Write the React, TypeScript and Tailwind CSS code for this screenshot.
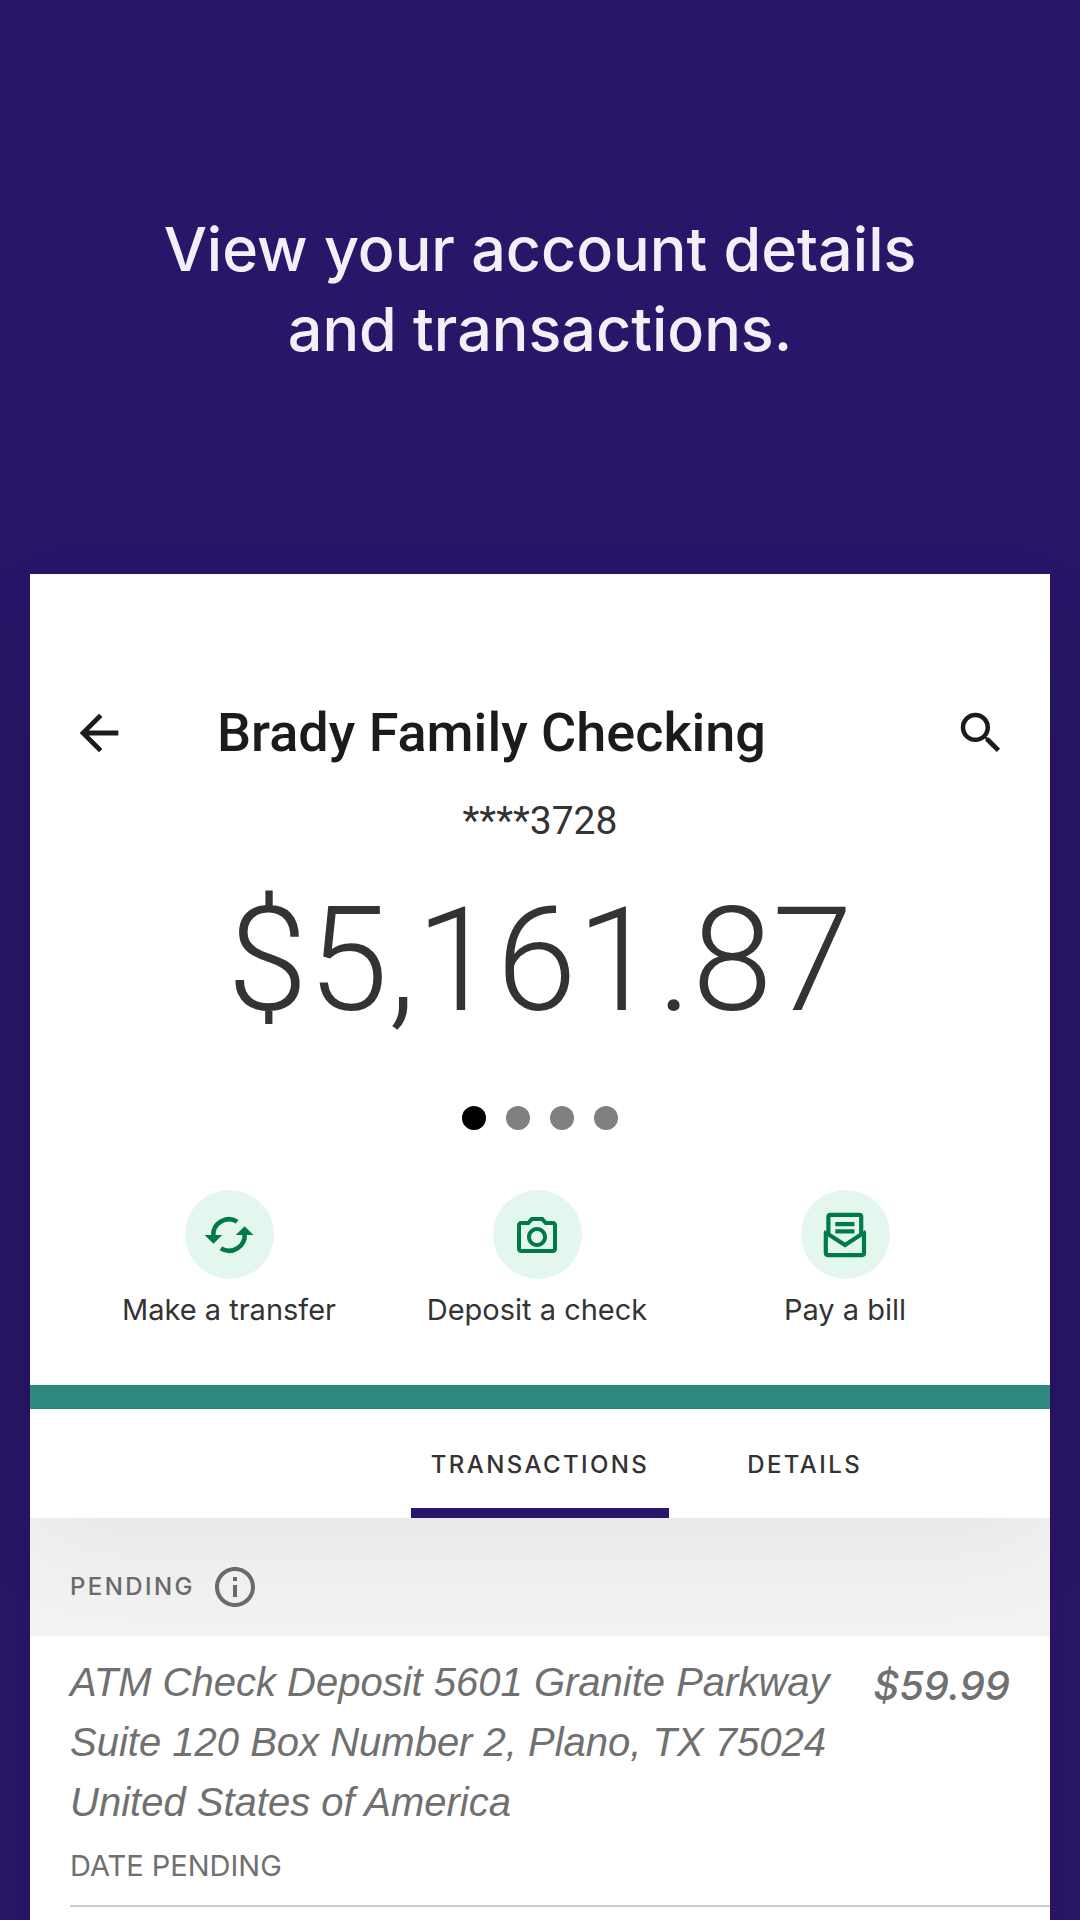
import React, { useState } from 'react';
import { MdArrowBack, MdInfoOutline, MdSearch } from 'react-icons/md';

interface Action {
  label: string;
  icon: React.ReactNode;
}

interface Transaction {
  id: number;
  description: string;
  amount: string;
  status: string;
}

const TransferIcon = () => (
  <svg viewBox="-25 -25 50 50" className="size-[50px]" fill="none" stroke="currentColor" strokeWidth={4.6}>
    <path d="M-15.7 1A15.7 15.7 0 0 1 8.2 -13.4" />
    <path d="M15.7 -1A15.7 15.7 0 0 1 -8.2 13.4" />
    <path d="M-24.4 0h17.6l-8.8 8.8zM24.4 0H6.8l8.8 -8.8z" fill="currentColor" stroke="none" />
  </svg>
);

const CameraIcon = () => (
  <svg viewBox="0 -1 24 24" className="size-[48px]" fill="currentColor">
    <path d="M14.12 4l1.83 2H20v12H4V6h4.05l1.83-2h4.24M15 2H9L7.17 4H4c-1.1 0-2 .9-2 2v12c0 1.1.9 2 2 2h16c1.1 0 2-.9 2-2V6c0-1.1-.9-2-2-2h-3.17L15 2zm-3 7c1.65 0 3 1.35 3 3s-1.35 3-3 3-3-1.35-3-3 1.35-3 3-3m0-2c-2.76 0-5 2.24-5 5s2.24 5 5 5 5-2.24 5-5-2.24-5-5-5z" />
  </svg>
);

const BillIcon = () => (
  <svg viewBox="-25 -25 50 50" className="size-[50px]" fill="none" stroke="currentColor" strokeWidth={4.2}>
    <path d="M-16.6 -1.5V-18.2q0 -2 2 -2H14.2q2 0 2 2V-1.5" />
    <path d="M-18.6 -3.6q-.6 .6 -.6 1.6V18.1q0 2 2 2H17q2 0 2 -2V-2q0 -1 -.6 -1.6" />
    <path d="M-19 -2.2L0 10L18.8 -2.2" />
    <path d="M-9.7 -10.8H9.4M-9.7 -3.6H9.4" />
  </svg>
);

const actions: Action[] = [
  { label: 'Make a transfer', icon: <TransferIcon /> },
  { label: 'Deposit a check', icon: <CameraIcon /> },
  { label: 'Pay a bill', icon: <BillIcon /> },
];

const transactions: Transaction[] = [
  {
    id: 1,
    description: 'ATM Check Deposit 5601 Granite Parkway Suite 120 Box Number 2, Plano, TX 75024 United States of America',
    amount: '$59.99',
    status: 'DATE PENDING',
  },
];

const pages = [0, 1, 2, 3];

const App = () => {
  const [page, setPage] = useState(0);
  const [tab, setTab] = useState('transactions');

  return (
    <div className="flex min-h-screen flex-col bg-[#291669] px-[30px] font-['Inter',sans-serif]">
      <h1 className="px-20 pt-[209px] pb-[205px] text-center text-[61px] leading-[80px] font-medium text-[#f2f0f7]">
        View your account details <br /> and transactions.
      </h1>

      <main className="flex grow flex-col bg-white shadow-[0_60px_100px_rgba(0,0,0,0.10)]">
        <section className="z-10 bg-white shadow-[0_16px_110px_rgba(0,0,0,0.06)]">
          <header className="flex items-center pt-[129px] pr-[42px] pl-10 font-['Roboto',sans-serif] text-[#1b1b1b]">
            <button aria-label="Back">
              <MdArrowBack className="size-[58px]" />
            </button>
            <h2 className="ml-[89px] grow text-[54px] leading-[60px] font-medium">Brady Family Checking</h2>
            <button aria-label="Search">
              <MdSearch className="size-[54px]" />
            </button>
          </header>

          <div className="text-center font-['Roboto',sans-serif] text-[#333333]">
            <p className="mt-[34px] text-[39px] leading-[48px]">****3728</p>
            <p className="mt-[35px] text-[145px] leading-[160px] font-light">$5,161.87</p>
          </div>

          <div className="mt-[66px] flex justify-center gap-5">
            {pages.map((p) => (
              <button
                key={p}
                aria-label={`Account ${p + 1}`}
                onClick={() => setPage(p)}
                className={`size-6 rounded-full ${p === page ? 'bg-black' : 'bg-[#808080]'}`}
              />
            ))}
          </div>

          <div className="mt-[60px] grid grid-cols-3 pr-[51px] pb-[55px] pl-[45px]">
            {actions.map((action) => (
              <button key={action.label} className="flex flex-col items-center gap-[11px]">
                <span className="flex size-[89px] items-center justify-center rounded-full bg-[#e4f7ef] text-[#007a48]">
                  {action.icon}
                </span>
                <span className="text-[29px] leading-[40px] text-[#333333]">{action.label}</span>
              </button>
            ))}
          </div>

          <div className="h-6 bg-[#2f8880]" />

          <nav className="grid h-[109px] grid-cols-[1fr_auto_1fr] text-2xl font-medium tracking-widest text-[#333333]">
            <button
              onClick={() => setTab('transactions')}
              className={`col-start-2 border-t-12 border-b-10 border-t-transparent px-5 ${tab === 'transactions' ? 'border-b-[#291669]' : 'border-b-transparent'}`}
            >
              TRANSACTIONS
            </button>
            <button
              onClick={() => setTab('details')}
              className={`ml-[58px] justify-self-start border-t-12 border-b-10 border-t-transparent px-5 ${tab === 'details' ? 'border-b-[#291669]' : 'border-b-transparent'}`}
            >
              DETAILS
            </button>
          </nav>
        </section>

        <div className="flex items-center gap-4 bg-[#f2f2f2] pt-[45px] pb-[25px] pl-10 text-[#6b6b6b]">
          <h3 className="text-2xl leading-[48px] font-medium tracking-widest">PENDING</h3>
          <button aria-label="About pending transactions">
            <MdInfoOutline className="size-12" />
          </button>
        </div>

        <ul className="relative z-20 grow bg-white pl-10 text-[#707070]">
          {transactions.map((t) => (
            <li key={t.id} className="border-b-2 border-[#cccccc] pt-4 pb-[19px]">
              <div className="flex justify-between gap-10 pr-10 font-['Liberation_Sans',sans-serif] text-[40px] leading-[60px] italic">
                <p className="flex-1">{t.description}</p>
                <p className="pt-1 font-['Inter',sans-serif] font-medium">{t.amount}</p>
              </div>
              <p className="mt-[14px] text-[29px] leading-[40px]">{t.status}</p>
            </li>
          ))}
        </ul>
      </main>
    </div>
  );
};

export default App;
